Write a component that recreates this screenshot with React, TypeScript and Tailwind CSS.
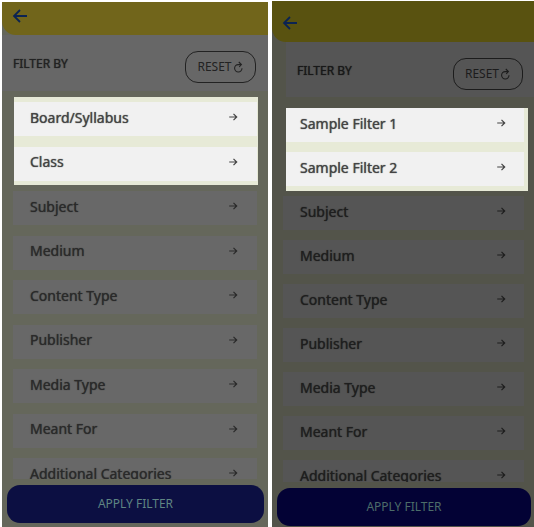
const LABELS = ["Subject", "Medium", "Content Type", "Publisher", "Media Type", "Meant For", "Additional Categories"];

const themes = {
  left: {
    panel: "mt-[2px] bg-[#65675b]",
    header: "h-[33px] pl-[10px] pt-[6px] bg-[#71651b]",
    heading: "h-[56px] pl-[11px] pr-[12px] bg-[#676767]",
    title: "mt-[21px] text-[#222222]",
    reset: "mt-[16px] w-[71px] border-[#222222] text-[#222222]",
    scroller: "h-[388px] pt-[11px] pl-[11px] pr-[11px]",
    list: "h-[390px]",
    spotlight: "-top-[5px] left-px -right-px h-[88px]",
    row: "w-full bg-[#686868] text-[#2a2a2a] pl-[17px] pr-[19px]",
    lit: "ml-px w-[calc(100%-1px)] bg-[#f1f1f1] text-[#444444] pl-[16px] pr-[19px]",
    footer: "pt-[6px] pl-[5px] pr-[4px] pb-[4px]",
    apply: "bg-[#0c0f42] text-[#5f8583]",
  },
  right: {
    panel: "mt-px bg-[#53544a]",
    header: "h-[41px] pl-[10px] pt-[14px] bg-[#595210]",
    heading: "ml-[14px] h-[55px] pl-[11px] pr-[11px] bg-[#555555]",
    title: "mt-[21px] text-[#181818]",
    reset: "mt-[16px] w-[70px] border-[#1c1c1c] text-[#1c1c1c]",
    scroller: "h-[385px] pt-[11px] pl-[11px] pr-[10px]",
    list: "h-[386px]",
    spotlight: "top-0 left-[3px] -right-[4px] h-[83px]",
    row: "w-full bg-[#555555] text-[#1e1e1e] pl-[17px] pr-[18px]",
    lit: "ml-[3px] w-[calc(100%-3px)] bg-[#f1f1f1] text-[#444444] pl-[14px] pr-[18px]",
    footer: "pt-[6px] pl-[5px] pr-[3px] pb-px",
    apply: "bg-[#030235] text-[#4c6c69]",
  },
};

function Arrow() {
  return (
    <svg viewBox="0 0 10 10" className="size-[10px]" fill="none" stroke="currentColor" strokeWidth="1.2" aria-hidden="true">
      <path d="M1.2 5H8.6M5.5 1.8L8.7 5L5.5 8.2" />
    </svg>
  );
}

function Panel({ side, featured }: { side: "left" | "right"; featured: string[] }) {
  const t = themes[side];
  return (
    <section className={`flex min-w-0 flex-col overflow-hidden ${t.panel}`}>
      <header className={`rounded-bl-[14px] ${t.header}`}>
        <button type="button" aria-label="Back" className="block text-[#0b2352]">
          <svg viewBox="0 0 16 16" className="size-[16px]" fill="none" stroke="currentColor" strokeWidth="1.8" aria-hidden="true">
            <path d="M15 8H2M8 2L2 8L8 14" />
          </svg>
        </button>
      </header>
      <div className={`flex items-start justify-between ${t.heading}`}>
        <h2 className={`text-[12px] leading-[16px] [text-shadow:0_0_1px_currentColor] ${t.title}`}>FILTER BY</h2>
        <button type="button" className={`flex h-[32px] items-center justify-center rounded-[13px] border text-[12px] ${t.reset}`}>
          RESET
          <svg viewBox="0 0 12 12" className="size-[12px]" fill="none" stroke="currentColor" strokeWidth="1.1" aria-hidden="true">
            <path d="M9.3 3.6H6.2A3.7 3.7 0 1 0 10 7.3M6.8 1L9.4 3.6L7.2 6" />
          </svg>
        </button>
      </div>
      <div className={`overflow-hidden ${t.scroller}`}>
        <ul className={`relative flex flex-col justify-between ${t.list}`}>
          <li aria-hidden="true" className={`absolute bg-[#e7ead7] ${t.spotlight}`} />
          {[...featured, ...LABELS].map((label, i) => (
            <li key={label} className="relative">
              <button type="button" className={`flex h-[34px] items-center justify-between pb-[4px] text-left text-[14px] [text-shadow:0_0_1px_currentColor] ${i < 2 ? t.lit : t.row}`}>
                {label}
                <Arrow />
              </button>
            </li>
          ))}
        </ul>
      </div>
      <footer className={t.footer}>
        <button type="button" className={`block h-[38px] w-full rounded-[13px] text-[12px] ${t.apply}`}>APPLY FILTER</button>
      </footer>
    </section>
  );
}

export default function App() {
  return (
    <main className="grid grid-cols-[266fr_262fr] items-start gap-[4px] bg-white pl-[2px] font-['Noto_Sans',sans-serif]">
      <Panel side="left" featured={["Board/Syllabus", "Class"]} />
      <Panel side="right" featured={["Sample Filter 1", "Sample Filter 2"]} />
    </main>
  );
}
